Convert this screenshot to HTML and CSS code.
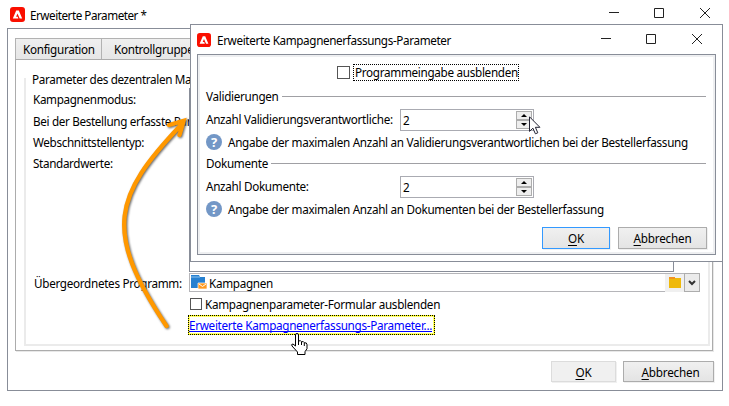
FILE: index.html
```html
<!DOCTYPE html>
<html lang="de">
<head>
<meta charset="utf-8">
<title>Erweiterte Parameter</title>
<link rel="stylesheet" href="styles.css">
</head>
<body>
<main class="window">
  <header class="titlebar">
    <svg class="logo" viewBox="0 0 15 15"><rect width="15" height="15" rx="3" fill="#fa0f00"/><path d="M6.2 3.5h2.6l3.4 8H9.7L7.5 6.5 6.1 9.7h1.6l.7 1.8H2.8z" fill="#fff"/></svg>
    <h1>Erweiterte Parameter *</h1>
    <svg class="controls" viewBox="0 0 101 11"><path d="M0 5.5h10M45.5 1.5h9v9h-9zM91 1l10 10M101 1l-10 10"/></svg>
  </header>
  <section class="frame">
    <nav class="tabs"><span class="tab active">Konfiguration</span><span class="tab">Kontrollgruppe</span></nav>
    <div class="pane">
      <fieldset class="form">
        <legend>Parameter des dezentralen Ma</legend>
        <div class="static">
          <span>Kampagnenmodus:</span>
          <span>Bei der Bestellung erfasste Par</span>
          <span>Webschnittstellentyp:</span>
          <span>Standardwerte:</span>
          <div class="list"></div>
        </div>
        <div class="row">
          <label>Übergeordnetes Programm:</label>
          <div class="picker">
            <svg class="program" viewBox="0 0 16 15"><path d="M0 0h8l1 2h5v11H0z" fill="#2680d0"/><path d="M0 2h9" stroke="#8dc2ed"/><path d="M7 8h9v6H7z" fill="#ff9a1f" stroke="#fff" stroke-width=".7"/><path d="M8 9l3.5 2.5L15 9" fill="none" stroke="#fff"/></svg>
            <span>Kampagnen</span>
            <span class="folder"><svg viewBox="0 0 12 11"><path d="M0 0h6v2H0z" fill="#f19320"/><path d="M0 2h6V1h6v10H0z" fill="#efb90a"/></svg></span>
          </div>
          <span class="drop"><svg viewBox="0 0 8 6"><path d="M1 1l3 3 3-3" fill="none" stroke="#333" stroke-width="2"/></svg></span>
        </div>
        <div class="check"><i class="box"></i><span>Kampagnenparameter-Formular ausblenden</span></div>
        <a class="link"><span>Erweiterte Kampagnenerfassungs-Parameter...</span></a>
      </fieldset>
    </div>
    <footer class="actions"><button class="btn ok off"><u>O</u>K</button><button class="btn cancel"><u>A</u>bbrechen</button></footer>
  </section>
</main>

<section class="dialog">
  <header class="dialog-title">
    <svg class="logo" viewBox="0 0 15 15"><rect width="15" height="15" rx="3" fill="#fa0f00"/><path d="M6.2 3.5h2.6l3.4 8H9.7L7.5 6.5 6.1 9.7h1.6l.7 1.8H2.8z" fill="#fff"/></svg>
    <h2>Erweiterte Kampagnenerfassungs-Parameter</h2>
    <svg class="controls" viewBox="0 0 101 11"><path d="M0 5.5h10M45.5 1.5h9v9h-9zM91 1l10 10M101 1l-10 10"/></svg>
  </header>
  <div class="dialog-body">
    <div class="hide"><i class="box big"></i><span class="focus">Programmeingabe ausblenden</span></div>
    <div class="group g1"><span>Validierungen</span></div>
    <div class="field"><label>Anzahl Validierungsverantwortliche:</label><div class="spin"><span>2</span><span class="steps"><i><svg viewBox="0 0 6 3"><path d="M0 3l3-3 3 3z"/></svg></i><i><svg viewBox="0 0 6 3"><path d="M0 0h6L3 3z"/></svg></i></span></div></div>
    <div class="hint"><b class="help">?</b><span>Angabe der maximalen Anzahl an Validierungsverantwortlichen bei der Bestellerfassung</span></div>
    <div class="group g2"><span>Dokumente</span></div>
    <div class="field"><label>Anzahl Dokumente:</label><div class="spin"><span>2</span><span class="steps"><i><svg viewBox="0 0 6 3"><path d="M0 3l3-3 3 3z"/></svg></i><i><svg viewBox="0 0 6 3"><path d="M0 0h6L3 3z"/></svg></i></span></div></div>
    <div class="hint"><b class="help">?</b><span>Angabe der maximalen Anzahl an Dokumenten bei der Bestellerfassung</span></div>
    <footer class="dialog-actions"><button class="btn ok primary"><u>O</u>K</button><button class="btn cancel"><u>A</u>bbrechen</button></footer>
  </div>
</section>

<svg class="arrow" viewBox="0 0 90 230"><path d="M61.500 219C-3 123 10 88 75 19M64 18l14.500-4-4 14" /></svg>
<svg class="pointer" viewBox="0 0 12 19"><path d="M.5.8v14.6l3.4-3.2 2.5 5.6 2.4-1-2.4-5.5h4.5z" fill="#fff" stroke="#223"/></svg>
<svg class="hand" viewBox="0 0 17 22"><path d="M4.5 13V2q0-1.5 1.5-1.5T7.500 2v6q2.500-1 3 .7 2.300-.6 2.800 1 2.700-.4 2.700 2v4l-2 3v2.800H6.500v-2.500L1 13q-1-2 1-2z" fill="#fff" stroke="#000"/><path d="M7.500 8v4M10.500 9v3M13.300 10v3" stroke="#000"/></svg>
</body>
</html>
```
FILE: styles.css
```css
* { box-sizing: border-box; }
body { margin: 0; width: 729px; height: 406px; overflow: hidden; position: relative; background: #fff; color: #000; font: 11.7px/16px "Noto Sans", "Open Sans", sans-serif; letter-spacing: -.3px; white-space: nowrap; }
h1, h2 { margin: 0; font: inherit; }
svg { display: block; }
.window { padding-left: 7px; width: 723px; }
.titlebar { height: 28px; display: flex; align-items: center; padding-left: 3px; }
.logo { width: 15px; height: 15px; margin-right: 5px; }
.titlebar h1, .dialog-title h2 { flex: 1; padding-top: 1px; }
.titlebar h1 { letter-spacing: -.48px; }
.dialog-title h2 { letter-spacing: -.36px; }
.controls { width: 101px; height: 11px; fill: none; stroke: #222; margin-right: 13px; margin-bottom: 4px; }
.frame { height: 363px; border: 1px solid #888d98; padding: 9px 8px 0 7px; }
.tabs { height: 21px; display: flex; }
.tab { width: 87px; border: 1px solid #b2b2b2; border-bottom: 0; background: linear-gradient(#efefef, #e6e6e6); padding: 2px 0 0 7px; }
.tab + .tab { width: 91px; border-left: 0; padding-left: 12px; }
.pane { width: 698px; height: 292px; border: 1px solid #acacac; box-shadow: 1px 1px #e8e8e8; padding: 11px 2px 5px 8px; }
.form { margin: 0; height: 275px; min-width: 0; border: 2px solid #ebebeb; padding: 0 0 0 8px; }
.form legend { padding: 0 0 0 6px; margin-left: -8px; height: 16px; line-height: 16px; letter-spacing: -.34px; }
.static { display: grid; grid-template-columns: 156px 484px; grid-template-rows: 22px 22px 20px 22px; align-items: center; height: 186px; padding-top: 1px; margin-left: -1px; }
.static span { grid-column: 1; letter-spacing: -.34px; }
.list { grid-column: 2; grid-row: 1 / 6; width: 485px; height: 184px; border: 1px solid #888d98; align-self: start; }
.row { display: flex; align-items: center; height: 19px; }
.row label { width: 155px; }
.picker { width: 495px; height: 19px; border: 1px solid #b5b5b9; border-right: 0; display: flex; align-items: center; padding-left: 1px; }
.program { width: 16px; height: 15px; margin-right: 2px; }
.folder { margin-left: auto; width: 19px; height: 18px; background: #f0f0f0; display: grid; place-items: center; }
.folder svg { width: 12px; height: 11px; }
.drop { width: 16px; height: 19px; border: 1px solid #adadad; background: #ebebeb; display: grid; place-items: center; }
.drop svg { width: 8px; height: 6px; }
.check { display: flex; align-items: center; height: 16px; margin: 4px 0 3px 156px; line-height: 18px; }
.box { width: 12px; height: 12px; border: 1px solid #555; margin-right: 3px; }
.link { display: block; margin-left: 154px; width: 247px; height: 20px; color: #00f; border: 1px dotted #000; background: linear-gradient(#fff, #fff) padding-box, linear-gradient(#ff0, #ff0) border-box; box-shadow: inset 0 0 0 1px #ffff70; padding-top: 1px; }
.link span { display: inline-block; height: 15px; line-height: 16px; border-bottom: 1px solid #00f; }
.actions { display: flex; justify-content: flex-end; gap: 7px; margin-top: 10px; }
.btn { font: inherit; letter-spacing: -.2px; height: 21px; padding: 0; border: 1px solid #acacac; background: linear-gradient(#f0f0f0, #e4e4e4); color: #000; box-shadow: 1px 1px #f0f0f0; }
.btn u { text-underline-offset: 2px; }
.ok { width: 65px; }
.cancel { width: 91px; }
.actions .cancel { padding-left: 4px; }
.off { border-color: #dcdcdc; background: #f0f0f0; }
.dialog { position: absolute; left: 190px; top: 24px; width: 533px; height: 238px; border: 1px solid #888d98; background: #fff; padding: 0 6px; }
.dialog-title { height: 29px; display: flex; align-items: center; }
.dialog-title .logo { width: 14px; height: 14px; margin-right: 6px; }
.dialog-title .controls { margin-right: 14px; margin-bottom: 3px; }
.dialog-body { height: 201px; border: 1px solid #888d98; box-shadow: inset 0 0 0 2px #eeeff1; padding: 9px 9px 0 8px; display: flex; flex-direction: column; }
.hide { height: 17px; display: flex; align-items: center; margin-left: 131px; }
.big { width: 13px; height: 13px; }
.focus { border: 1px dotted #000; height: 17px; width: 166px; line-height: 15px; padding-left: 1px; }
.group { display: flex; align-items: center; height: 16px; line-height: 16px; }
.group::after { content: ""; height: 1px; background: #a0a0a4; flex: 1; margin-left: 3px; }
.g1 { margin-top: 7px; margin-bottom: 5px; }
.g2 { margin-top: 4px; margin-bottom: 5px; }
.field { display: flex; height: 22px; line-height: 20px; }
.field label { width: 194px; }
.spin { width: 134px; height: 22px; border: 1px solid #aaabb2; display: flex; justify-content: space-between; padding: 1px 1px 0 2px; line-height: 18px; }
.steps { width: 16px; height: 18px; display: flex; flex-direction: column; }
.steps i { height: 9px; border: 1px solid #adadad; background: #eee; display: grid; place-items: center; }
.steps svg { width: 6px; height: 3px; }
.hint { display: flex; align-items: center; height: 20px; padding-top: 2px; line-height: 16px; }
.help { width: 16px; height: 16px; border-radius: 50%; background: #7397c6; color: #fff; text-align: center; font-size: 13px; line-height: 16px; letter-spacing: 0; margin-right: 6px; }
.dialog-actions { display: flex; gap: 8px; justify-content: flex-end; margin: 9px -1px 0 0; }
.dialog-actions .ok { width: 68px; height: 22px; }
.dialog-actions .cancel { width: 89px; height: 22px; }
.primary { border-color: #3399ff; }
.arrow { position: absolute; left: 105px; top: 107px; width: 90px; height: 230px; fill: none; stroke: #ff9800; stroke-width: 4.4; stroke-linecap: round; stroke-linejoin: miter; filter: drop-shadow(1px 1px 1.2px #666); }
.pointer { position: absolute; left: 529px; top: 116px; width: 12px; height: 19px; }
.hand { position: absolute; left: 291px; top: 333px; width: 17px; height: 22px; fill: none; }
```
